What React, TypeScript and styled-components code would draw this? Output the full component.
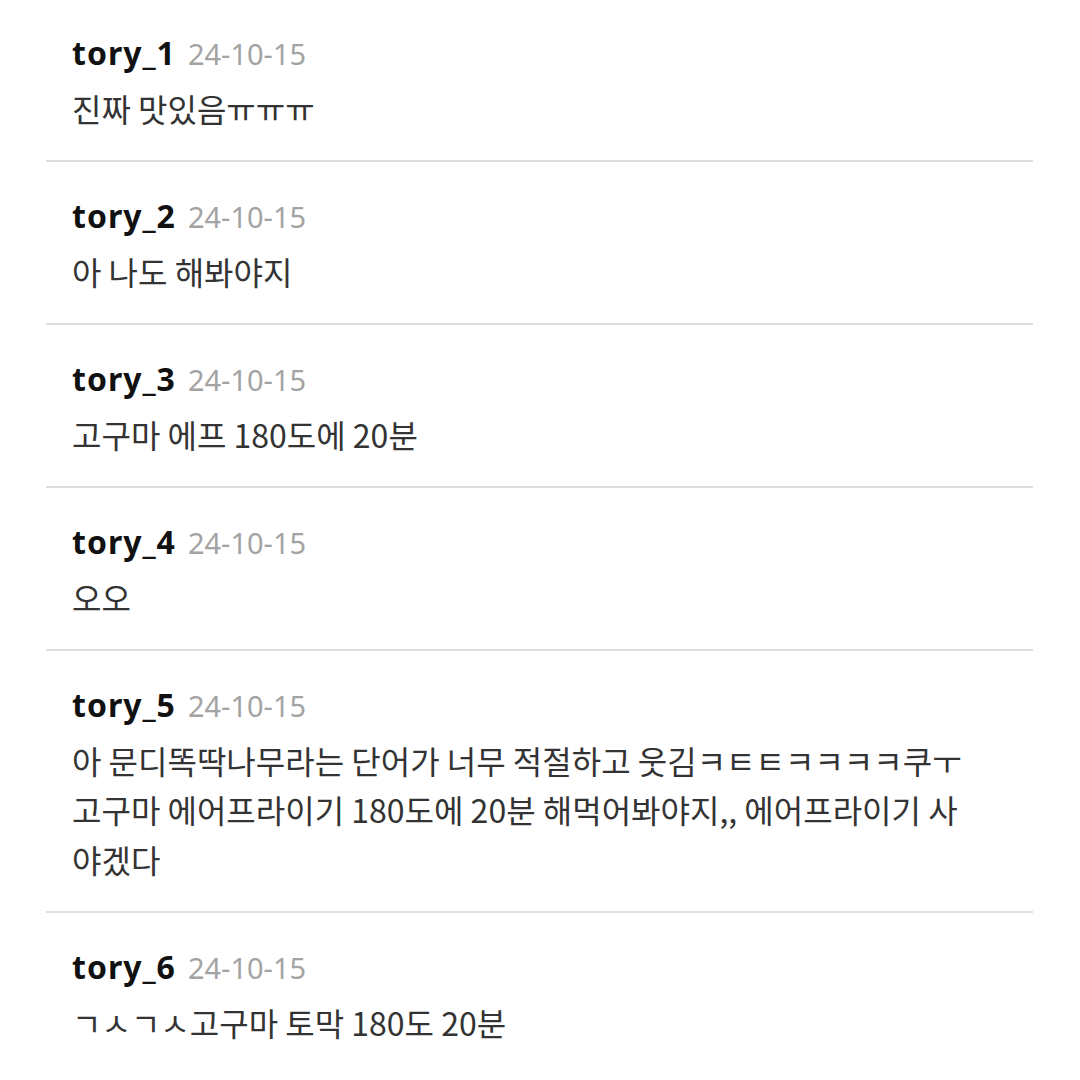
import React from 'react'
import styled, { createGlobalStyle } from 'styled-components'

const GlobalStyle = createGlobalStyle`
  html, body {
    margin: 0;
    padding: 0;
    background: #fff;
  }
  body {
    font-family: "Noto Sans", "Noto Sans CJK KR", sans-serif;
  }
`

type Comment = {
  user: string
  date: string
  text: string
}

const comments: Comment[] = [
  { user: 'tory_1', date: '24-10-15', text: '진짜 맛있음ㅠㅠㅠ' },
  { user: 'tory_2', date: '24-10-15', text: '아 나도 해봐야지' },
  { user: 'tory_3', date: '24-10-15', text: '고구마 에프 180도에 20분' },
  { user: 'tory_4', date: '24-10-15', text: '오오' },
  {
    user: 'tory_5',
    date: '24-10-15',
    text: '아 문디똑딱나무라는 단어가 너무 적절하고 웃김ㅋㅌㅌㅋㅋㅋㅋ쿠ㅜ 고구마 에어프라이기 180도에 20분 해먹어봐야지,, 에어프라이기 사야겠다',
  },
  { user: 'tory_6', date: '24-10-15', text: 'ㄱㅅㄱㅅ고구마 토막 180도 20분' },
]

export default function App() {
  return (
    <>
      <GlobalStyle />
      <List>
        {comments.map((c) => (
          <Item key={c.user}>
            <Meta>
              <User>{c.user}</User>
              <Date>{c.date}</Date>
            </Meta>
            <Body>{c.text}</Body>
          </Item>
        ))}
      </List>
    </>
  )
}

const List = styled.ul`
  list-style: none;
  margin: 0;
  padding: 0 47px 0 46px;
  height: 1080px;
  overflow: hidden;
`

const Item = styled.li`
  padding: 28px 58px 26.5px 26px;
  border-bottom: 2px solid #dedede;
  display: flex;
  flex-direction: column;
  gap: 5px;
  &:first-child {
    padding-top: 26.5px;
  }
  &:last-child {
    border-bottom: none;
  }
`

const Meta = styled.div`
  display: flex;
  align-items: baseline;
  gap: 12px;
  height: 52px;
  line-height: 52px;
`

const User = styled.span`
  font-size: 32px;
  font-weight: 700;
  letter-spacing: 1px;
  color: #111;
`

const Date = styled.span`
  font-size: 29px;
  font-weight: 400;
  color: #a3a3a3;
`

const Body = styled.p`
  margin: 0;
  font-size: 32px;
  line-height: 49.5px;
  color: #333;
  font-family: "Noto Sans CJK KR", "Noto Sans", sans-serif;
`
